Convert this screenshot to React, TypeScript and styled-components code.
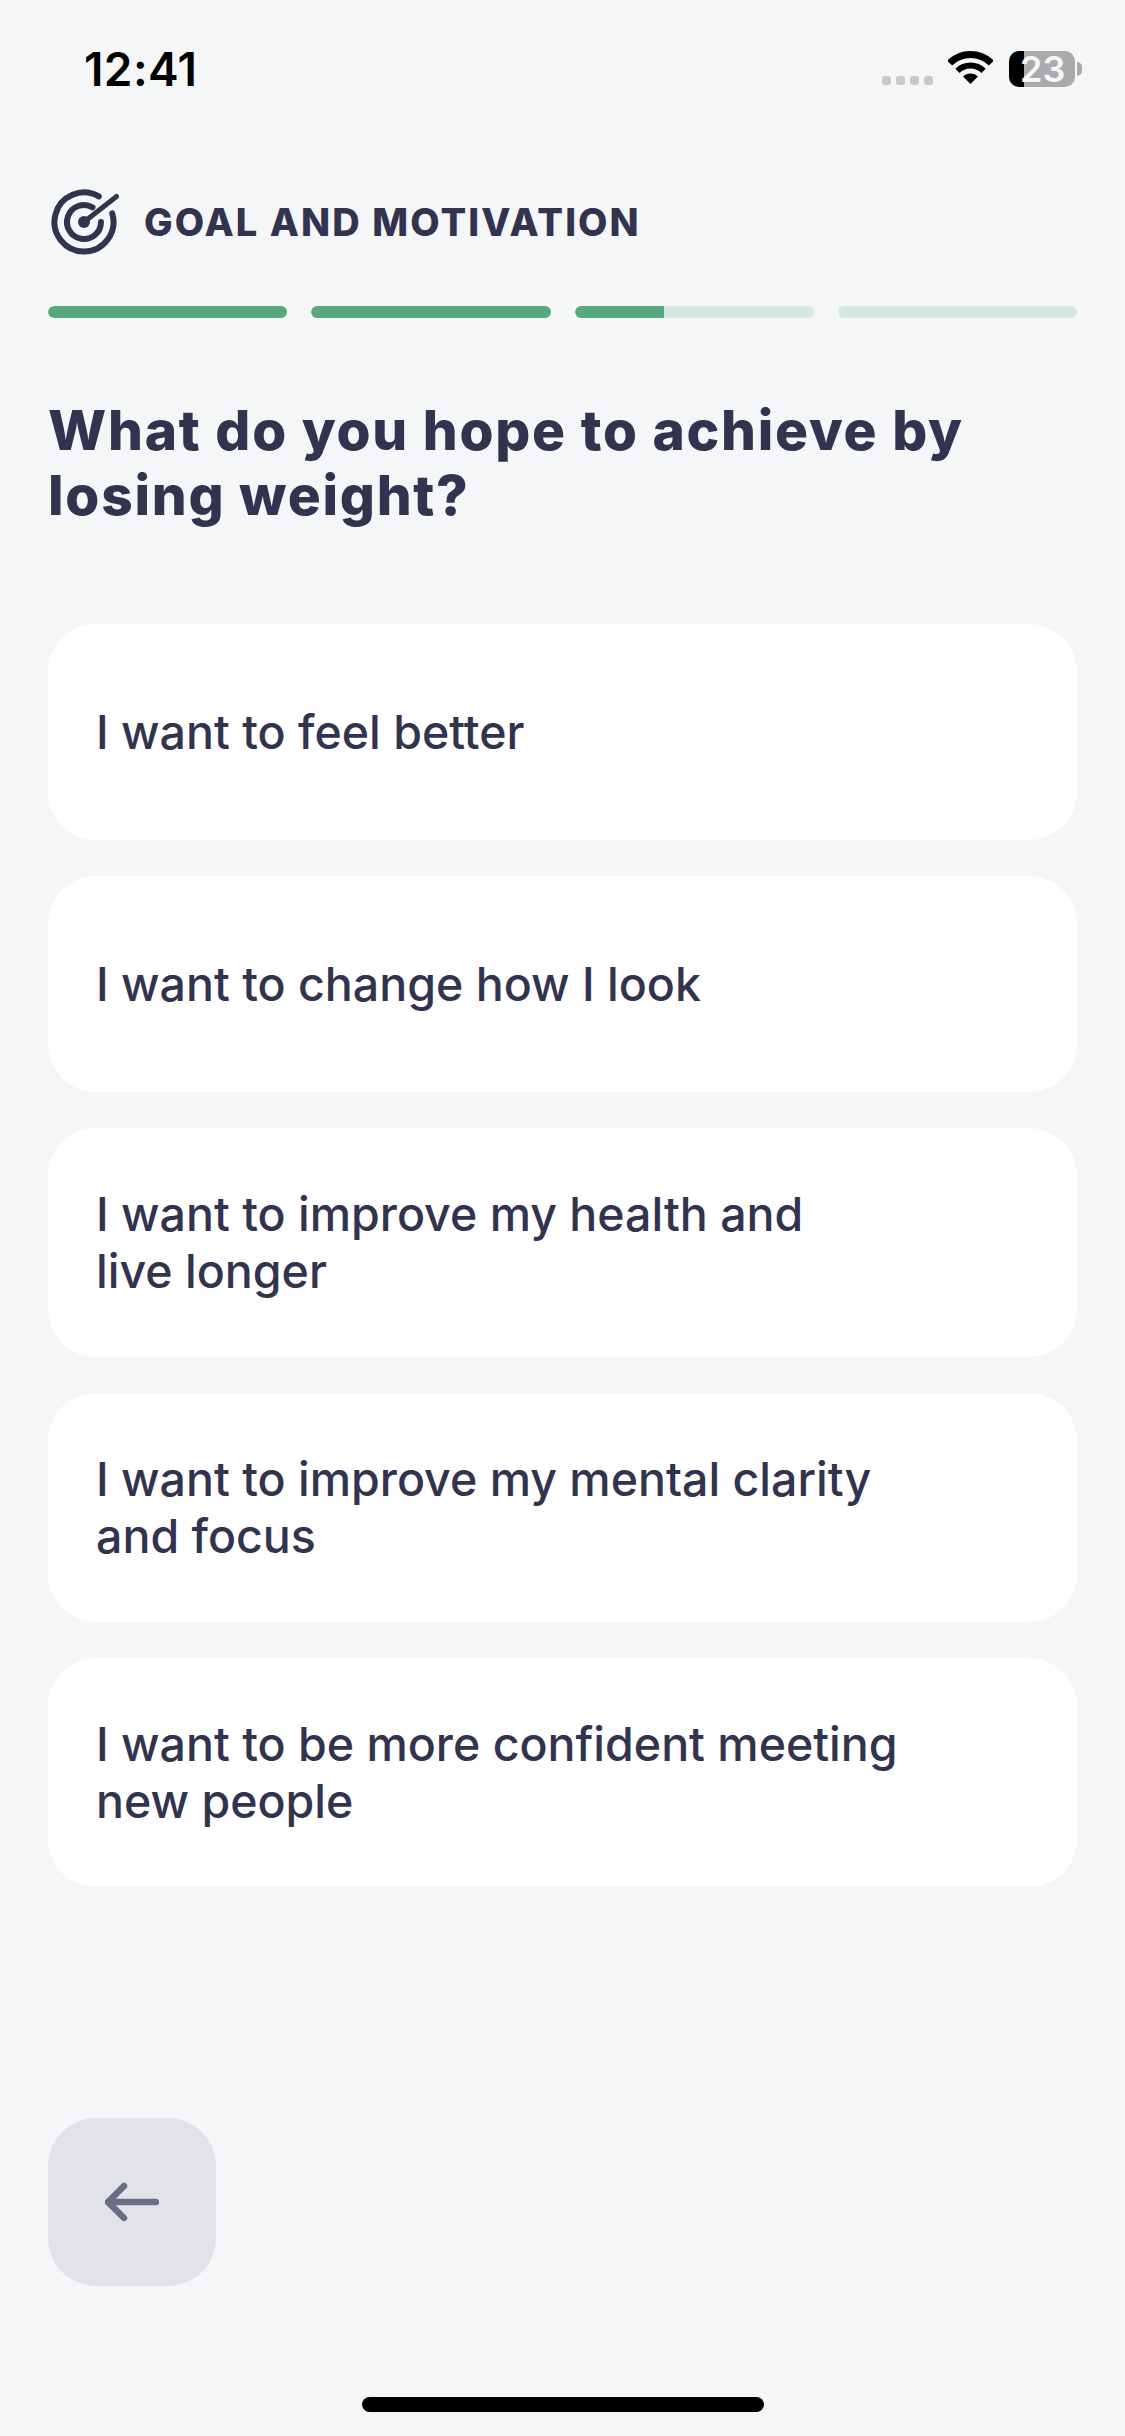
import React from 'react'
import styled, { createGlobalStyle } from 'styled-components'

const GlobalStyle = createGlobalStyle`
  html, body {
    margin: 0;
    padding: 0;
    background: #f5f6f8;
  }
`

const Page = styled.div`
  box-sizing: border-box;
  width: 1125px;
  height: 2436px;
  padding: 0 48px 24px;
  display: flex;
  flex-direction: column;
  background: #f5f6f8;
  color: #31334f;
  font-family: Inter, 'Liberation Sans', sans-serif;
  overflow: hidden;
`

const StatusBar = styled.div`
  box-sizing: border-box;
  height: 100px;
  padding: 46px 0 0 36px;
  display: flex;
  justify-content: space-between;
  align-items: flex-start;
`

const Time = styled.span`
  font-size: 46px;
  line-height: 46px;
  font-weight: 600;
  letter-spacing: 0.4px;
  color: #000;
`

const StatusIcons = styled.div`
  display: flex;
  align-items: flex-start;
  margin-top: 5px;
  margin-right: -5px;
`

const SignalDots = styled.div`
  display: flex;
  gap: 5px;
  margin: 25px 15px 0 0;
`

const SignalDot = styled.span`
  width: 9px;
  height: 9px;
  border-radius: 3px;
  background: #c9c9cb;
`

const Battery = styled.div`
  width: 66px;
  height: 36px;
  margin-left: 16px;
  padding-left: 11px;
  box-sizing: border-box;
  border-radius: 10px;
  background: linear-gradient(90deg, #000 15px, #aaaaac 15px);
  color: #f5f6f8;
  font-size: 36px;
  line-height: 36px;
  font-weight: 600;
`

const BatteryTip = styled.span`
  width: 5px;
  height: 14px;
  margin: 11px 0 0 2px;
  border-radius: 0 7px 7px 0;
  background: #aaaaac;
`

const Header = styled.div`
  height: 70px;
  margin-top: 87px;
  display: flex;
  align-items: center;
  gap: 25px;
  padding-left: 1px;
`

const Eyebrow = styled.h2`
  margin: 0;
  font-size: 38px;
  line-height: 44px;
  font-weight: 800;
  letter-spacing: 2.1px;
`

const Progress = styled.div`
  margin-top: 49px;
  display: grid;
  grid-template-columns: repeat(4, 1fr);
  gap: 24px;
`

const Track = styled.div`
  height: 12px;
  border-radius: 6px;
  background: #d6e8e1;
  overflow: hidden;
`

const TrackFill = styled.div<{ $part: number }>`
  height: 100%;
  width: ${p => p.$part * 100}%;
  border-radius: 6px 0 0 6px;
  background: #57a97d;
`

const Question = styled.h1`
  margin: 80px 0 0;
  font-size: 55px;
  line-height: 65px;
  font-weight: 800;
  letter-spacing: 1.75px;
`

const Answers = styled.div`
  margin-top: 96px;
  display: flex;
  flex-direction: column;
  gap: 36px;
`

const Answer = styled.div`
  box-sizing: border-box;
  min-height: 216px;
  padding: 58px 48px 57px;
  display: flex;
  align-items: center;
  border-radius: 48px;
  background: #fff;
  font-size: 46.5px;
  line-height: 57px;
  font-weight: 500;
  white-space: pre-line;
`

const BackButton = styled.button`
  width: 168px;
  height: 168px;
  margin-top: auto;
  padding: 0;
  border: 0;
  border-radius: 48px;
  background: #e2e3e9;
  display: flex;
  align-items: center;
  justify-content: center;
`

const HomeIndicator = styled.div`
  width: 402px;
  height: 15px;
  margin: 111px auto 0;
  border-radius: 8px;
  background: #000;
`

const answers = [
  'I want to feel better',
  'I want to change how I look',
  'I want to improve my health and\nlive longer',
  'I want to improve my mental clarity\nand focus',
  'I want to be more confident meeting\nnew people'
]

const TargetIcon = () => (
  <svg width='70' height='70' viewBox='0 0 70 70' fill='none' stroke='#31334f' strokeWidth='6' strokeLinecap='round'>
    <path d='M49.75 9.45A29.5 29.5 0 1 0 63.2 26.4' />
    <path d='M43.5 20.3A17 17 0 1 0 52 35' />
    <path d='M35 35L67.5 9.5' strokeWidth='5' />
    <circle cx='35' cy='35' r='6' fill='#31334f' stroke='none' />
  </svg>
)

const WifiIcon = () => (
  <svg width='45' height='33' viewBox='0 0 45 33' fill='none' stroke='#000'>
    <path d='M1.64 12.14A29.5 29.5 0 0 1 43.36 12.14' strokeWidth='7' />
    <path d='M9.42 19.92A18.5 18.5 0 0 1 35.58 19.92' strokeWidth='6' />
    <path d='M22.5 33L15 25.5A10.6 10.6 0 0 1 30 25.5Z' fill='#000' stroke='none' />
  </svg>
)

const BackIcon = () => (
  <svg width='54' height='40' viewBox='0 0 54 40' fill='none' stroke='#6b6d87' strokeWidth='6.5' strokeLinecap='round' strokeLinejoin='round'>
    <path d='M3 20H51' />
    <path d='M19 4L3 20L19 36' />
  </svg>
)

export default function App() {
  return (
    <>
      <GlobalStyle />
      <Page>
        <StatusBar>
          <Time>12:41</Time>
          <StatusIcons>
            <SignalDots>
              <SignalDot />
              <SignalDot />
              <SignalDot />
              <SignalDot />
            </SignalDots>
            <WifiIcon />
            <Battery>23</Battery>
            <BatteryTip />
          </StatusIcons>
        </StatusBar>
        <Header>
          <TargetIcon />
          <Eyebrow>GOAL AND MOTIVATION</Eyebrow>
        </Header>
        <Progress>
          <Track><TrackFill $part={1} /></Track>
          <Track><TrackFill $part={1} /></Track>
          <Track><TrackFill $part={0.375} /></Track>
          <Track><TrackFill $part={0} /></Track>
        </Progress>
        <Question>What do you hope to achieve by losing weight?</Question>
        <Answers>
          {answers.map(text => (
            <Answer key={text}>{text}</Answer>
          ))}
        </Answers>
        <BackButton aria-label='Back'>
          <BackIcon />
        </BackButton>
        <HomeIndicator />
      </Page>
    </>
  )
}
